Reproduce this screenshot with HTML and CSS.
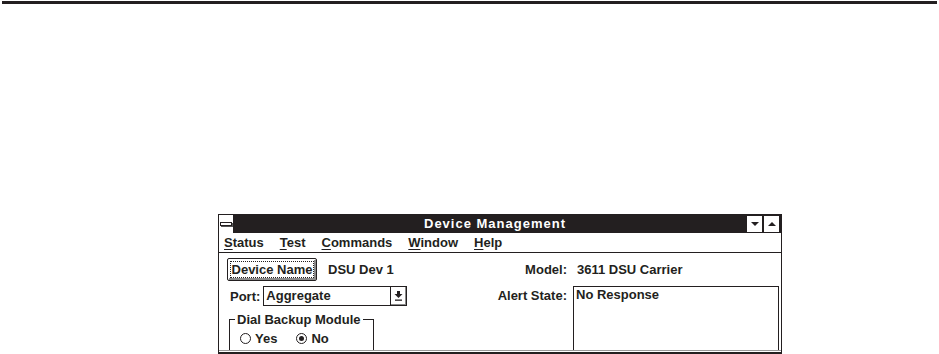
FILE: index.html
```html
<!DOCTYPE html>
<html lang="en">
<head>
    <meta charset="UTF-8">
    <meta name="viewport" content="width=device-width, initial-scale=1.0">
    <title>Device Management</title>
    <link rel="stylesheet" href="styles.css">
</head>
<body>
    <div class="rule"></div>

    <div class="window">
        <div class="titlebar">
            <div class="sysmenu"><span class="dash"></span></div>
            <div class="title">Device Management</div>
            <div class="ctrl"><span class="tri-down"></span></div>
            <div class="ctrl"><span class="tri-up"></span></div>
        </div>

        <div class="menubar">
            <span><u>S</u>tatus</span>
            <span><u>T</u>est</span>
            <span><u>C</u>ommands</span>
            <span><u>W</u>indow</span>
            <span><u>H</u>elp</span>
        </div>

        <div class="content">
            <div class="left">
                <div class="row name-row">
                    <button class="btn"><span class="focus">Device Name</span></button>
                    <span class="value">DSU Dev 1</span>
                </div>
                <div class="row port-row">
                    <label class="port-label">Port:</label>
                    <div class="combo">
                        <span class="combo-text">Aggregate</span>
                        <span class="combo-btn">
                            <svg width="9" height="10" viewBox="0 0 9 10">
                                <path d="M3 0h3v3h2.5L4.5 7 0.5 3H3z" fill="#231f20"/>
                                <rect x="1" y="8.5" width="7" height="1.3" fill="#231f20"/>
                            </svg>
                        </span>
                    </div>
                </div>
                <fieldset class="group">
                    <legend>Dial Backup Module</legend>
                    <div class="radios">
                        <span class="radio"><span class="circle"></span>Yes</span>
                        <span class="radio"><span class="circle checked"></span>No</span>
                    </div>
                </fieldset>
            </div>

            <div class="right">
                <span class="label model-label">Model:</span>
                <span class="value model-value">3611 DSU Carrier</span>
                <span class="label alert-label">Alert State:</span>
                <div class="alert-box">No Response</div>
            </div>
        </div>
        <div class="bottom-edge"></div>
    </div>
</body>
</html>
```

FILE: styles.css
```css
body {
    margin: 0;
    background-color: #fff;
    color: #231f20;
    font-family: "Liberation Sans", Arial, sans-serif;
    font-size: 13px;
    font-weight: bold;
    overflow: hidden;
}
.rule {
    height: 3px;
    margin: 1px 2px 0;
    background-color: #231f20;
}
.window {
    width: 562px;
    margin: 210px 0 0 218px;
    border: 1px solid #231f20;
    border-bottom: none;
}

/* title bar */
.titlebar {
    display: flex;
    height: 18px;
    background-color: #231f20;
}
.sysmenu {
    width: 14px;
    background-color: #fff;
    display: flex;
    align-items: center;
    justify-content: center;
}
.dash {
    width: 10px;
    height: 2px;
    border: 1px solid #231f20;
    background-color: #fff;
    box-shadow: 1px 1px 0 #555;
}
.title {
    flex: 1;
    color: #fff;
    text-align: center;
    line-height: 18px;
    letter-spacing: 1px;
    padding-left: 10px;
}
.ctrl {
    width: 15px;
    margin: 1px 2px 1px 0;
    background-color: #fff;
    display: flex;
    align-items: center;
    justify-content: center;
}
.tri-down, .tri-up {
    width: 0;
    height: 0;
    border-left: 4px solid transparent;
    border-right: 4px solid transparent;
}
.tri-down {
    border-top: 4px solid #231f20;
}
.tri-up {
    border-bottom: 4px solid #231f20;
}

/* menu */
.menubar {
    display: flex;
    gap: 16px;
    height: 19px;
    line-height: 19px;
    padding-left: 5px;
    border-bottom: 1px solid #231f20;
}
.menubar u {
    text-underline-offset: 2px;
}

/* body of the window */
.content {
    display: flex;
    height: 97px;
    overflow: hidden;
}
.left {
    width: 190px;
    padding-left: 8px;
}
.row {
    display: flex;
    align-items: center;
    white-space: nowrap;
}
.name-row {
    margin-top: 5px;
    gap: 11px;
}
.btn {
    height: 23px;
    width: 90px;
    padding: 0;
    font: inherit;
    color: inherit;
    background-color: #fff;
    border: 1px solid #231f20;
    border-radius: 2px;
    box-shadow: inset 1px 1px 0 #fff, inset -2px -2px 0 #8a8a8a;
}
.focus {
    display: inline-block;
    padding: 0 1px;
    line-height: 15px;
    outline: 1px dotted #231f20;
}
.port-row {
    margin-top: 5px;
    padding-left: 3px;
    gap: 3px;
}
.combo {
    display: flex;
    width: 142px;
    height: 18px;
    border: 1px solid #231f20;
}
.combo-text {
    flex: 1;
    line-height: 18px;
    padding-left: 2px;
}
.combo-btn {
    width: 15px;
    border-left: 1px solid #231f20;
    display: flex;
    align-items: center;
    justify-content: center;
    box-shadow: inset -1px -1px 0 #8a8a8a;
}
.group {
    box-sizing: border-box;
    width: 145px;
    height: 80px;
    margin: 6px 0 0 2px;
    padding: 0 0 0 10px;
    border: 1px solid #231f20;
    white-space: nowrap;
}
.group legend {
    padding: 0 2px;
    margin-left: -5px;
    line-height: 15px;
}
.radios {
    display: flex;
    gap: 19px;
    margin-top: 4px;
}
.radio {
    display: flex;
    align-items: center;
    gap: 4px;
}
.circle {
    width: 9px;
    height: 9px;
    border: 1px solid #231f20;
    border-radius: 50%;
    display: flex;
    align-items: center;
    justify-content: center;
}
.circle.checked::after {
    content: "";
    width: 5px;
    height: 5px;
    border-radius: 50%;
    background-color: #231f20;
}
.right {
    flex: 1;
    display: grid;
    grid-template-columns: 1fr 206px;
    grid-template-rows: 33px auto;
    column-gap: 6px;
    padding-right: 2px;
    white-space: nowrap;
}
.label {
    text-align: right;
}
.model-label, .model-value {
    margin-top: 5px;
    line-height: 23px;
}
.model-value {
    padding-left: 4px;
}
.alert-label {
    margin-top: 1px;
    line-height: 18px;
}
.alert-box {
    height: 80px;
    border: 1px solid #231f20;
    padding-left: 2px;
    line-height: 15px;
}
.bottom-edge {
    height: 1px;
    border-top: 1px solid #999;
    border-bottom: 2px solid #231f20;
}
```
